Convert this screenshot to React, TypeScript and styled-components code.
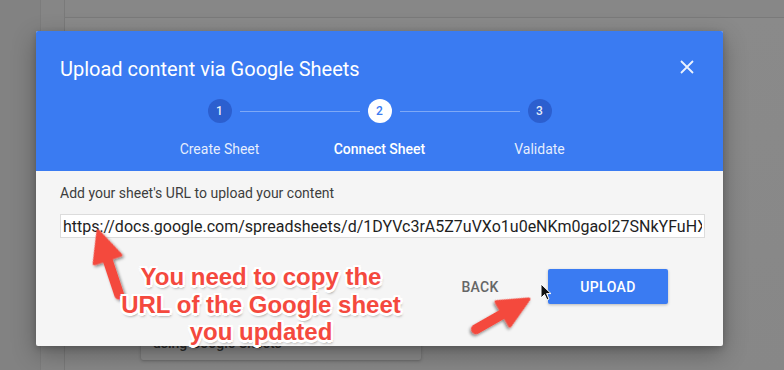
import React from "react";
import styled, { createGlobalStyle } from "styled-components";

const GlobalStyle = createGlobalStyle`
  html, body {
    margin: 0;
    padding: 0;
    background: #878787;
    font-family: Roboto, "Noto Sans", Arial, sans-serif;
  }
`;

const Page = styled.div`
  position: relative;
  width: 784px;
  height: 370px;
  overflow: hidden;
  display: flex;
  background: #878787;
`;

const SideRail = styled.div`
  width: 40px;
  flex-shrink: 0;
  background: #828282;
  border-right: 1px solid #7c7c7c;
`;

const SubRail = styled.div`
  width: 23px;
  flex-shrink: 0;
  background: #868686;
  border-right: 1px solid #7a7a7a;
`;

const Main = styled.div`
  flex: 1;
  display: flex;
  flex-direction: column;
`;

const TopBar = styled.div`
  height: 17px;
  border-bottom: 1px solid #7a7a7a;
  background: #878787;
`;

const Content = styled.div`
  padding: 282px 0 0 76px;
  background: linear-gradient(#8a8a8a, #878787);
  flex: 1;
`;

const BgCard = styled.div`
  width: 280px;
  height: 60px;
  box-sizing: border-box;
  background: #8b8b8b;
  border-radius: 2px;
  box-shadow: 0 1px 3px rgba(0, 0, 0, 0.25);
  padding: 35px 12px 0;
  font-size: 14px;
  font-weight: 500;
  color: #2c2c2c;
`;

const Dialog = styled.div`
  position: absolute;
  left: 36px;
  top: 31px;
  width: 687px;
  height: 315px;
  background: #f5f5f5;
  border-radius: 2px;
  overflow: hidden;
  box-shadow: 0 8px 24px rgba(0, 0, 0, 0.3), 0 2px 6px rgba(0, 0, 0, 0.2);
  display: flex;
  flex-direction: column;
`;

const Header = styled.div`
  background: #3a7bf2;
  height: 140px;
  box-sizing: border-box;
  padding: 26px 24px 12px;
  display: flex;
  flex-direction: column;
`;

const TitleRow = styled.div`
  display: flex;
  align-items: center;
  justify-content: space-between;
  height: 24px;
`;

const Title = styled.div`
  color: #fff;
  font-size: 20px;
  line-height: 24px;
  font-weight: 400;
`;

const CloseButton = styled.button`
  width: 24px;
  height: 24px;
  padding: 0;
  border: none;
  background: transparent;
  display: flex;
  align-items: center;
  justify-content: center;
  margin-top: -4px;
  cursor: pointer;
`;

const Stepper = styled.div`
  margin-top: 18px;
  display: flex;
  flex-direction: column;
  align-items: center;
`;

const DotsRow = styled.div`
  display: flex;
  align-items: center;
`;

const Dot = styled.div<{ $active: boolean }>`
  width: 24px;
  height: 24px;
  border-radius: 50%;
  display: flex;
  align-items: center;
  justify-content: center;
  font-size: 12px;
  font-weight: 500;
  background: ${(p) => (p.$active ? "#ffffff" : "#2c5fcf")};
  color: ${(p) => (p.$active ? "#3a7bf2" : "rgba(255,255,255,0.9)")};
`;

const Connector = styled.div`
  width: 120px;
  height: 1px;
  margin: 0 8px;
  background: rgba(255, 255, 255, 0.35);
`;

const LabelsRow = styled.div`
  margin-top: 16px;
  display: grid;
  grid-template-columns: repeat(3, 160px);
`;

const StepLabel = styled.div<{ $active: boolean }>`
  text-align: center;
  font-size: 14px;
  line-height: 20px;
  color: ${(p) => (p.$active ? "#fff" : "rgba(255,255,255,0.88)")};
  font-weight: ${(p) => (p.$active ? 500 : 400)};
`;

const Body = styled.div`
  padding: 12px 18px 0 24px;
  display: flex;
  flex-direction: column;
`;

const FieldLabel = styled.div`
  font-size: 14px;
  line-height: 20px;
  color: #3d3d3d;
`;

const UrlInput = styled.input`
  margin-top: 11px;
  height: 24px;
  box-sizing: border-box;
  border: 1px solid #dcdcdc;
  background: #fff;
  padding: 0 2px;
  font-family: Roboto, Arial, sans-serif;
  font-size: 16px;
  color: #1e1e1e;
  outline: none;
`;

const Actions = styled.div`
  margin-top: 31px;
  padding-right: 37px;
  display: flex;
  justify-content: flex-end;
  gap: 24px;
`;

const TextButton = styled.button`
  width: 88px;
  height: 35px;
  border: none;
  background: transparent;
  font-family: Roboto, Arial, sans-serif;
  font-size: 14px;
  font-weight: 500;
  color: #666;
  letter-spacing: 0.3px;
`;

const PrimaryButton = styled.button`
  width: 120px;
  height: 35px;
  border: none;
  border-radius: 2px;
  background: #3a7bf2;
  color: #fff;
  font-family: Roboto, Arial, sans-serif;
  font-size: 14px;
  font-weight: 500;
  letter-spacing: 0.4px;
  box-shadow: 0 1px 3px rgba(0, 0, 0, 0.25);
`;

const Callout = styled.div`
  position: absolute;
  left: 90px;
  top: 263px;
  width: 342px;
  text-align: center;
  font-family: "Liberation Sans", Arial, sans-serif;
  font-weight: 700;
  font-size: 24px;
  line-height: 27.5px;
  color: #f4493e;
  text-shadow: -2px -2px 0 #fff, 2px -2px 0 #fff, -2px 2px 0 #fff,
    2px 2px 0 #fff, 0 -2.5px 0 #fff, 0 2.5px 0 #fff, -2.5px 0 0 #fff,
    2.5px 0 0 #fff, 1px 3px 3px rgba(0, 0, 0, 0.5);
`;

const Overlay = styled.svg`
  position: absolute;
  left: 0;
  top: 0;
  pointer-events: none;
`;

const steps = ["Create Sheet", "Connect Sheet", "Validate"];
const current = 1;

const Arrow = ({ x, y, angle, length }: { x: number; y: number; angle: number; length: number }) => (
  <g transform={`translate(${x} ${y}) rotate(${angle})`} filter="url(#shadow)">
    <line x1="0" y1="24" x2="0" y2={length - 5} stroke="#f4493e" strokeWidth="10" strokeLinecap="round" />
    <polygon points="0,0 -14,30 14,30" fill="#f4493e" stroke="#f4493e" strokeWidth="3" strokeLinejoin="round" />
  </g>
);

export default function App() {
  return (
    <>
      <GlobalStyle />
      <Page>
        <SideRail />
        <SubRail />
        <Main>
          <TopBar />
          <Content>
            <BgCard>using Google Sheets</BgCard>
          </Content>
        </Main>

        <Dialog>
          <Header>
            <TitleRow>
              <Title>Upload content via Google Sheets</Title>
              <CloseButton aria-label="close">
                <svg width="14" height="14" viewBox="0 0 14 14">
                  <path d="M1 1L13 13M13 1L1 13" stroke="#fff" strokeWidth="1.8" opacity="0.9" />
                </svg>
              </CloseButton>
            </TitleRow>
            <Stepper>
              <DotsRow>
                {steps.map((_, i) => (
                  <React.Fragment key={i}>
                    {i > 0 && <Connector />}
                    <Dot $active={i === current}>{i + 1}</Dot>
                  </React.Fragment>
                ))}
              </DotsRow>
              <LabelsRow>
                {steps.map((s, i) => (
                  <StepLabel key={s} $active={i === current}>
                    {s}
                  </StepLabel>
                ))}
              </LabelsRow>
            </Stepper>
          </Header>
          <Body>
            <FieldLabel>Add your sheet's URL to upload your content</FieldLabel>
            <UrlInput
              readOnly
              value="https://docs.google.com/spreadsheets/d/1DYVc3rA5Z7uVXo1u0eNKm0gaoI27SNkYFuHXk/edit"
            />
            <Actions>
              <TextButton>BACK</TextButton>
              <PrimaryButton>UPLOAD</PrimaryButton>
            </Actions>
          </Body>
        </Dialog>

        <Overlay width="784" height="370" viewBox="0 0 784 370">
          <defs>
            <filter id="shadow" x="-50%" y="-50%" width="200%" height="200%">
              <feDropShadow dx="1" dy="2" stdDeviation="1.5" floodColor="#000" floodOpacity="0.45" />
            </filter>
          </defs>
          <Arrow x={98} y={231} angle={-18.4} length={72} />
          <Arrow x={529} y={299} angle={60.3} length={66} />
          <path
            d="M541 284 L541 298 L544.5 294.5 L547 300 L549 299 L546.6 293.6 L551 293.6 Z"
            fill="#111"
            stroke="#fff"
            strokeWidth="1"
            strokeLinejoin="round"
          />
        </Overlay>

        <Callout>
          You need to copy the
          <br />
          URL of the Google sheet
          <br />
          you updated
        </Callout>
      </Page>
    </>
  );
}
